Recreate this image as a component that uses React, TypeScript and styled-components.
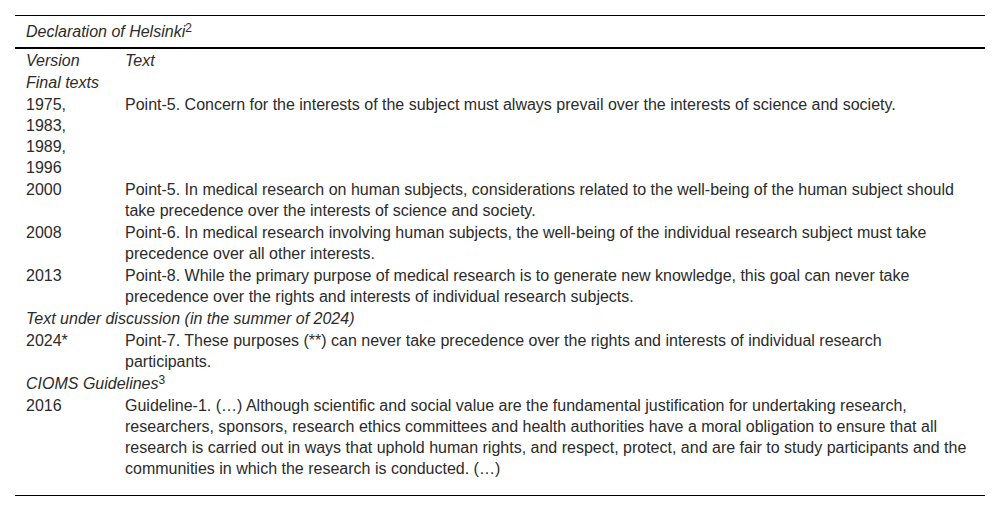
import React from 'react'
import styled, { createGlobalStyle } from 'styled-components'

const GlobalStyle = createGlobalStyle`
  html, body {
    margin: 0;
    padding: 0;
    background: #ffffff;
  }
  body {
    font-family: "Liberation Sans", Arial, sans-serif;
    color: #2b2b2b;
  }
`

const Page = styled.div`
  padding: 15px 15px 0 15px;
  width: 970px;
`

const Table = styled.table`
  width: 100%;
  table-layout: fixed;
  border-collapse: collapse;
  border-top: 1px solid #000;
  border-bottom: 1px solid #000;
  font-size: 16px;
  line-height: 21px;
`

const Col = styled.col<{ $w?: string }>`
  width: ${(p) => p.$w ?? 'auto'};
`

const Caption = styled.th`
  text-align: left;
  font-weight: normal;
  font-style: italic;
  padding: 5px 6px 5px 11px;
  border-bottom: 2px solid #000;
`

const HeadCell = styled.th<{ $first?: boolean }>`
  text-align: left;
  font-weight: normal;
  font-style: italic;
  vertical-align: top;
  padding: 1px 4px 0 ${(p) => (p.$first ? '11px' : '0')};
`

const GroupCell = styled.td`
  font-style: italic;
  padding: 1px 4px 0 11px;
`

const YearCell = styled.td`
  vertical-align: top;
  padding: 1px 4px 0 11px;
`

const TextCell = styled.td<{ $last?: boolean }>`
  vertical-align: top;
  padding: 1px 4px ${(p) => (p.$last ? '16px' : '0')} 0;
`

const Sup = styled.sup`
  font-style: normal;
  font-size: 12px;
  line-height: 0;
  vertical-align: 5px;
`

type Row =
  | { kind: 'group'; label: React.ReactNode }
  | { kind: 'entry'; year: React.ReactNode; text: React.ReactNode }

const rows: Row[] = [
  { kind: 'group', label: 'Final texts' },
  {
    kind: 'entry',
    year: (
      <>
        1975,
        <br />
        1983,
        <br />
        1989,
        <br />
        1996
      </>
    ),
    text: 'Point-5. Concern for the interests of the subject must always prevail over the interests of science and society.',
  },
  {
    kind: 'entry',
    year: '2000',
    text: 'Point-5. In medical research on human subjects, considerations related to the well-being of the human subject should take precedence over the interests of science and society.',
  },
  {
    kind: 'entry',
    year: '2008',
    text: 'Point-6. In medical research involving human subjects, the well-being of the individual research subject must take precedence over all other interests.',
  },
  {
    kind: 'entry',
    year: '2013',
    text: 'Point-8. While the primary purpose of medical research is to generate new knowledge, this goal can never take precedence over the rights and interests of individual research subjects.',
  },
  { kind: 'group', label: 'Text under discussion (in the summer of 2024)' },
  {
    kind: 'entry',
    year: '2024*',
    text: (
      <>
        Point-7. These purposes (**) can never take precedence over the rights and interests of individual research
        <br />
        participants.
      </>
    ),
  },
  {
    kind: 'group',
    label: (
      <>
        CIOMS Guidelines<Sup>3</Sup>
      </>
    ),
  },
  {
    kind: 'entry',
    year: '2016',
    text: 'Guideline-1. (…) Although scientific and social value are the fundamental justification for undertaking research, researchers, sponsors, research ethics committees and health authorities have a moral obligation to ensure that all research is carried out in ways that uphold human rights, and respect, protect, and are fair to study participants and the communities in which the research is conducted. (…)',
  },
]

const App = () => {
  return (
    <Page>
      <GlobalStyle />
      <Table>
        <colgroup>
          <Col $w="110px" />
          <Col />
        </colgroup>
        <thead>
          <tr>
            <Caption colSpan={2}>
              Declaration of Helsinki<Sup>2</Sup>
            </Caption>
          </tr>
          <tr>
            <HeadCell $first>Version</HeadCell>
            <HeadCell>Text</HeadCell>
          </tr>
        </thead>
        <tbody>
          {rows.map((row, i) =>
            row.kind === 'group' ? (
              <tr key={i}>
                <GroupCell colSpan={2}>{row.label}</GroupCell>
              </tr>
            ) : (
              <tr key={i}>
                <YearCell>{row.year}</YearCell>
                <TextCell $last={i === rows.length - 1}>{row.text}</TextCell>
              </tr>
            ),
          )}
        </tbody>
      </Table>
    </Page>
  )
}

export default App
